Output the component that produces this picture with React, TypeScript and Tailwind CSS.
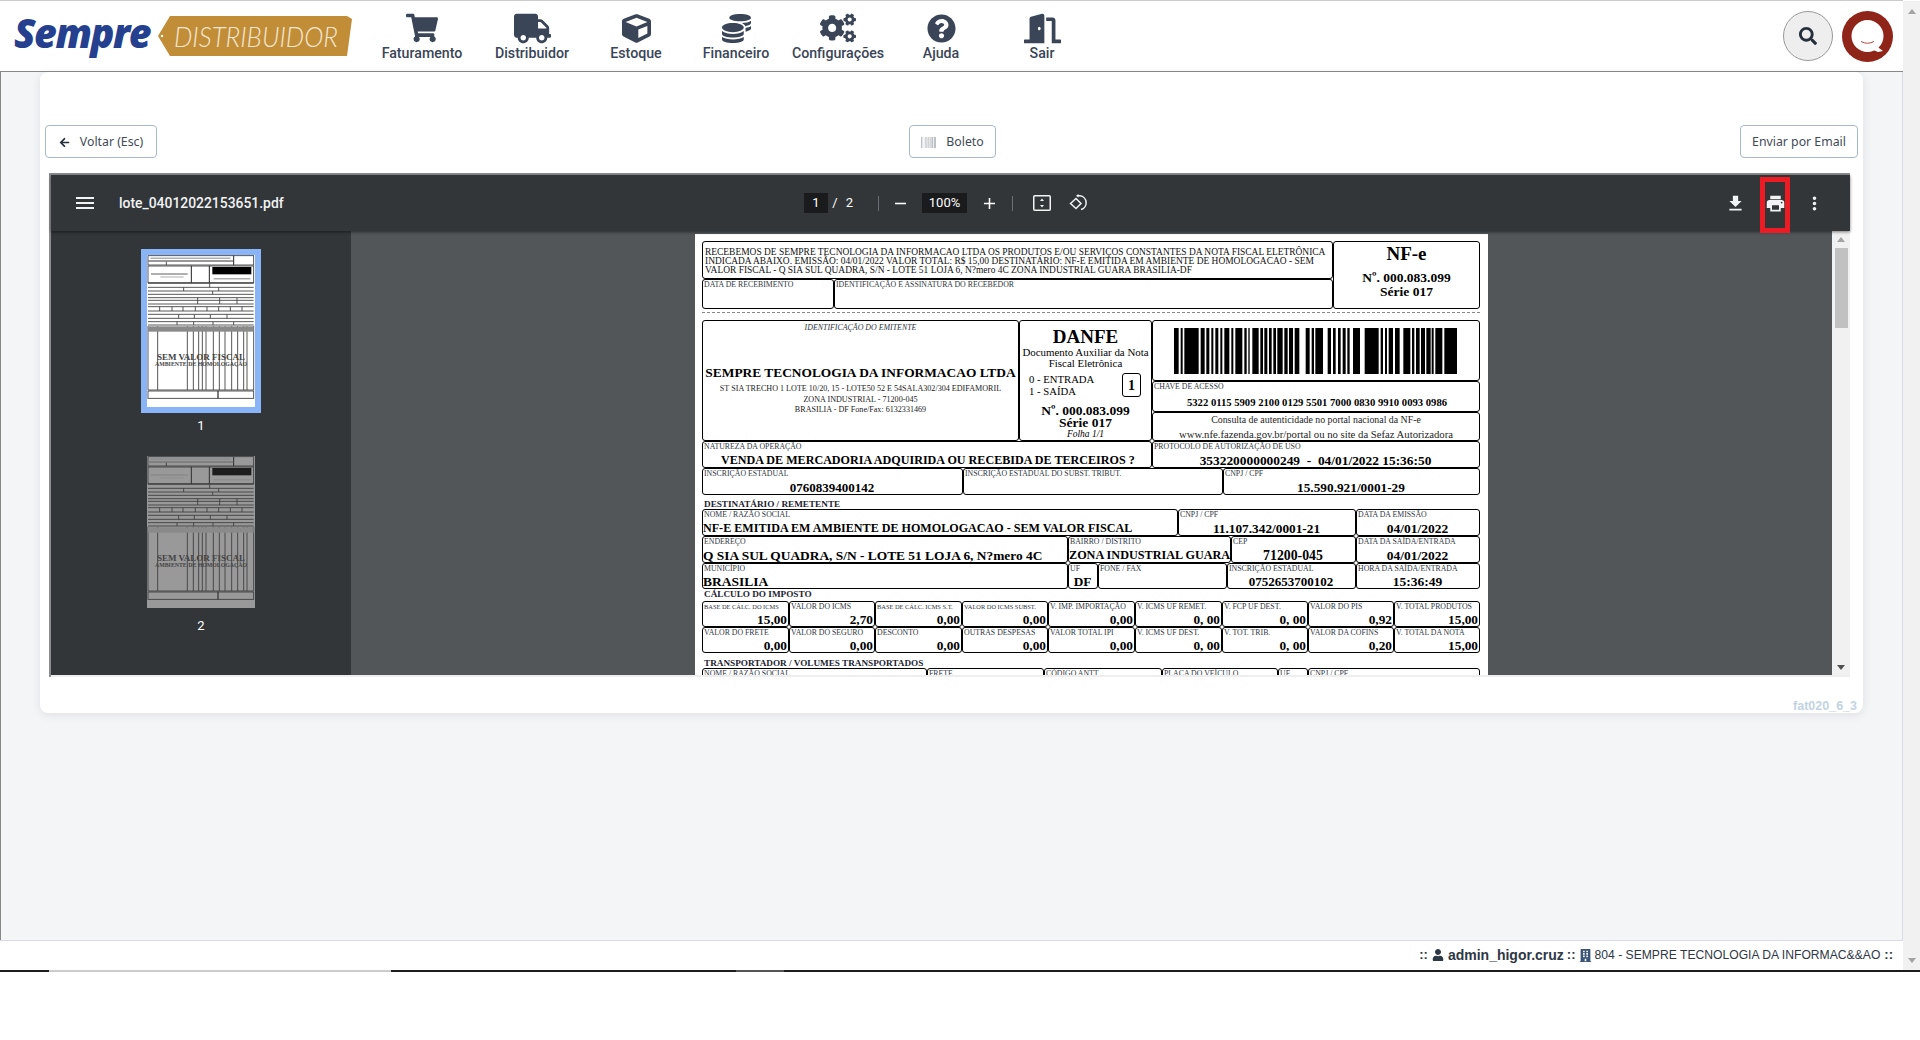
import React from "react";
import { FaShoppingCart, FaTruck, FaCube, FaCoins, FaCogs, FaQuestionCircle, FaDoorOpen, FaSearch, FaArrowLeft, FaBarcode, FaUser, FaBuilding } from "react-icons/fa";
import { MdMenu, MdFileDownload, MdPrint, MdMoreVert, MdRemove, MdAdd } from "react-icons/md";

const NAV: [string, React.ReactNode, string][] = [
  ["Faturamento", <FaShoppingCart size={32} />, "w-[100px]"],
  ["Distribuidor", <FaTruck size={37} />, "w-[120px]"],
  ["Estoque", <FaCube size={29} />, "w-[88px]"],
  ["Financeiro", <FaCoins size={29} />, "w-[112px]"],
  ["Configurações", <FaCogs size={36} />, "w-[92px]"],
  ["Ajuda", <FaQuestionCircle size={29} />, "w-[114px]"],
  ["Sair", <FaDoorOpen size={37} />, "w-[88px]"],
];

const BARS = [[13,27],[33,39],[44,87],[93,105],[110,119],[125,131],[137,146],[152,158],[164,179],[185,191],[197,218],[224,231],[236,240],[248,267],[272,280],[284,293],[298,306],[311,319],[323,339],[344,354],[358,370],[375,389],[408,420],[426,433],[437,460],[474,484],[490,498],[505,513],[519,528],[533,540],[550,571],[585,627],[633,640],[646,652],[657,670],[676,690],[701,722],[727,734],[739,750],[754,766],[770,783],[786,792],[797,818],[824,862]];

function Logo() {
  return (
    <svg width="360" height="60" viewBox="0 0 360 60" className="shrink-0">
      <text x="14" y="42" fontFamily="'Open Sans', sans-serif" fontWeight="800" fontStyle="italic" fontSize="40" letterSpacing="-1.5" fill="#24408e" textLength="136" lengthAdjust="spacingAndGlyphs">Sempre</text>
      <polygon points="170,10 347,10 352,13 347,50 170,50 158,30" fill="#c28d37" />
      <circle cx="162" cy="30" r="1.2" fill="#fff" />
      <text x="174" y="41" fontFamily="Lato, sans-serif" fontStyle="italic" fontWeight="300" fontSize="27" fill="#f1e6d2" textLength="164" lengthAdjust="spacingAndGlyphs">DISTRIBUIDOR</text>
    </svg>
  );
}

function Avatar() {
  return (
    <svg width="51" height="51" viewBox="0 0 51 51" className="shrink-0">
      <circle cx="25.5" cy="25.5" r="25.5" fill="#8f2418" />
      <circle cx="25.5" cy="25" r="16" fill="#fff" />
      <polygon points="33,34 41,40 36,41 29,38" fill="#fff" />
      <path d="M19 30.5 Q25.5 34 32 30.5" fill="none" stroke="#b5483c" strokeWidth="1" />
    </svg>
  );
}

function Thumb({ dim }: { dim?: boolean }) {
  const ys = [85, 97, 108, 118, 128, 136, 147, 155, 168, 178, 190, 200, 210];
  const xs = [32, 121, 139, 155, 166, 177, 199, 217, 234, 254, 272, 290, 300];
  return (
    <svg width="108" height="152" viewBox="0 0 324 456" className="block">
      <rect width="324" height="456" fill={dim ? "#999999" : "#ffffff"} />
      <g fill="none" stroke="#3c3c3c" strokeWidth="2.6">
        <rect x="3" y="2" width="257" height="28" />
        <line x1="58" y1="18" x2="58" y2="30" />
        <line x1="3" y1="18" x2="260" y2="18" stroke="#777" strokeWidth="4" />
        <rect x="260" y="2" width="60" height="28" />
        <rect x="3" y="33" width="130" height="50" />
        <rect x="133" y="33" width="54" height="50" />
        <rect x="187" y="33" width="133" height="50" />
        {ys.map((y) => <line key={y} x1="3" y1={y} x2="320" y2={y} />)}
        {[[188, 85, 97], [110, 97, 108], [215, 97, 108], [197, 108, 118], [152, 128, 147], [218, 128, 147], [270, 128, 147], [38, 155, 168], [75, 155, 168], [108, 155, 168], [145, 155, 168], [180, 155, 168], [215, 155, 168], [250, 155, 168], [285, 155, 168], [95, 178, 190], [142, 178, 190], [190, 178, 190], [240, 178, 190], [90, 200, 210], [140, 200, 210], [198, 200, 210], [260, 200, 210]].map(([x, a, b], i) => (
          <line key={i} x1={x} y1={a} x2={x} y2={b} />
        ))}
        {xs.map((x) => <line key={x} x1={x} y1="213" x2={x} y2="405" />)}
        <line x1="3" y1="213" x2="3" y2="405" />
        <line x1="320" y1="213" x2="320" y2="405" />
        <line x1="3" y1="405" x2="320" y2="405" />
        <rect x="3" y="408" width="210" height="22" />
        <rect x="213" y="408" width="107" height="22" />
      </g>
      <rect x="3" y="214" width="317" height="16" fill="#8a8a8a" />
      <rect x="196" y="36" width="117" height="22" fill={dim ? "#1d1d1d" : "#000"} />
      <g fill="#888">
        <rect x="10" y="8" width="240" height="3" />
        <rect x="12" y="55" width="110" height="4" />
        <rect x="40" y="65" width="70" height="2" />
        <rect x="200" y="70" width="110" height="3" />
      </g>
      <text x="162" y="315" textAnchor="middle" fontFamily="'Liberation Serif', serif" fontWeight="700" fontSize="27" fill="#444">SEM VALOR FISCAL</text>
      <text x="162" y="332" textAnchor="middle" fontFamily="'Liberation Serif', serif" fontWeight="700" fontSize="17.5" fill="#444">AMBIENTE DE HOMOLOGAÇÃO</text>
    </svg>
  );
}

function Cell({ w, label, value, align = "center", small, pad = 0, vsize = "text-[13.3px]" }: { w: number; label: string; value?: string; align?: "left" | "center" | "right"; small?: boolean; pad?: number; vsize?: string }) {
  const al = align === "left" ? "text-left" : align === "right" ? "text-right" : "text-center";
  return (
    <div style={{ width: w }} className="h-full shrink-0 border border-black rounded-[3px] flex flex-col justify-between overflow-hidden">
      <div className={`${small ? "text-[6.4px]" : "text-[7.8px]"} leading-[9px] pl-[1px] text-[#2f3640] whitespace-nowrap`}>{label}</div>
      {value !== undefined && <div style={{ paddingLeft: pad }} className={`${vsize} ${al} font-bold leading-[13px] whitespace-pre text-black pr-[1px]`}>{value}</div>}
    </div>
  );
}

function Heading({ text, h }: { text: string; h: string }) {
  return <div className={`${h} flex pl-[2px] text-[9.2px] leading-[10px] font-bold text-[#1c2230] whitespace-nowrap`}>{text}</div>;
}

function Danfe() {
  return (
    <div className="w-[793px] h-[441px] bg-white overflow-hidden pl-[7px] pt-[7px] shrink-0 text-black" style={{ fontFamily: "'Liberation Serif', serif" }}>
      <div className="w-[778px] flex h-[68px]">
        <div className="w-[631px] flex flex-col">
          <div className="h-[38px] border border-black rounded-[3px] px-[2px] pt-[6px] text-[9.45px] leading-[9.1px] text-[#101010] whitespace-nowrap">
            <div>RECEBEMOS DE SEMPRE TECNOLOGIA DA INFORMACAO LTDA OS PRODUTOS E/OU SERVIÇOS CONSTANTES DA NOTA FISCAL ELETRÔNICA</div>
            <div>INDICADA ABAIXO. EMISSÃO: 04/01/2022 VALOR TOTAL: R$ 15,00 DESTINATÁRIO: NF-E EMITIDA EM AMBIENTE DE HOMOLOGACAO - SEM</div>
            <div>VALOR FISCAL - Q SIA SUL QUADRA, S/N - LOTE 51 LOJA 6, N?mero 4C ZONA INDUSTRIAL GUARA BRASILIA-DF</div>
          </div>
          <div className="h-[30px] flex">
            <Cell w={132} label="DATA DE RECEBIMENTO" />
            <Cell w={499} label="IDENTIFICAÇÃO E ASSINATURA DO RECEBEDOR" />
          </div>
        </div>
        <div className="w-[147px] border border-black rounded-[3px] flex flex-col items-center font-bold">
          <div className="text-[19px] leading-[20px] mt-[2px]">NF-e</div>
          <div className="text-[13.5px] leading-[14px] mt-[7px]">Nº. 000.083.099</div>
          <div className="text-[13.5px] leading-[14px]">Série 017</div>
        </div>
      </div>
      <div className="w-[778px] h-[11px] pt-[3px] overflow-hidden">
        <div className="w-full border-t border-dashed border-[#888]" />
      </div>
      <div className="w-[778px] flex h-[121px]">
        <div className="w-[317px] shrink-0 border border-black rounded-[3px] flex flex-col items-center">
          <div className="text-[7.9px] leading-[9px] italic mt-[2px] text-[#2f3640]">IDENTIFICAÇÃO DO EMITENTE</div>
          <div className="text-[13.4px] leading-[15px] font-bold mt-[33px] whitespace-nowrap">SEMPRE TECNOLOGIA DA INFORMACAO LTDA</div>
          <div className="text-[8.1px] leading-[10.5px] mt-[4px] text-center text-[#222] whitespace-nowrap">
            <div>ST SIA TRECHO 1 LOTE 10/20, 15 - LOTE50 52 E 54SALA302/304 EDIFAMORIL</div>
            <div>ZONA INDUSTRIAL - 71200-045</div>
            <div>BRASILIA - DF Fone/Fax: 6132331469</div>
          </div>
        </div>
        <div className="w-[133px] shrink-0 border border-black rounded-[3px] flex flex-col items-center">
          <div className="text-[19px] leading-[20px] font-bold mt-[6px]">DANFE</div>
          <div className="text-[10.9px] leading-[11px] text-center whitespace-nowrap">Documento Auxiliar da Nota<br />Fiscal Eletrônica</div>
          <div className="w-full flex items-center justify-between pl-[9px] pr-[10px] mt-[4px]">
            <div className="text-[10.7px] leading-[12px]">0 - ENTRADA<br />1 - SAÍDA</div>
            <div className="w-[19px] h-[24px] border border-black rounded-[3px] flex items-center justify-center text-[14px] font-bold">1</div>
          </div>
          <div className="text-[13.5px] leading-[12px] font-bold mt-[8px]">Nº. 000.083.099</div>
          <div className="text-[13.5px] leading-[12px] font-bold">Série 017</div>
          <div className="text-[9.5px] leading-[10px] italic">Folha 1/1</div>
        </div>
        <div className="w-[328px] shrink-0 flex flex-col">
          <div className="h-[61px] border border-black rounded-[3px] pl-[21px] pt-[7px]">
            <svg width="283" height="46" viewBox="13 0 849 137" preserveAspectRatio="none" className="block">
              {BARS.map(([a, b]) => <rect key={a} x={a} y="0" width={b - a} height="137" fill="#000" />)}
            </svg>
          </div>
          <div className="h-[31px] border border-black rounded-[3px] flex flex-col">
            <div className="text-[7.8px] leading-[9px] pl-[1px] text-[#2f3640]">CHAVE DE ACESSO</div>
            <div className="text-[10.65px] leading-[11px] font-bold text-center mt-[6px] pl-[2px] whitespace-nowrap">5322 0115 5909 2100 0129 5501 7000 0830 9910 0093 0986</div>
          </div>
          <div className="h-[29px] border border-black rounded-[3px] leading-[14px] text-center text-[#1c1c1c] whitespace-nowrap">
            <div className="text-[9.85px]">Consulta de autenticidade no portal nacional da NF-e</div>
            <div className="text-[10.7px]">www.nfe.fazenda.gov.br/portal ou no site da Sefaz Autorizadora</div>
          </div>
        </div>
      </div>
      <div className="w-[778px] flex h-[27px]">
        <Cell w={450} label="NATUREZA DA OPERAÇÃO" value="VENDA DE MERCADORIA ADQUIRIDA OU RECEBIDA DE TERCEIROS ?" align="left" pad={18} vsize="text-[12.1px]" />
        <Cell w={328} label="PROTOCOLO DE AUTORIZAÇÃO DE USO" value="353220000000249  -  04/01/2022 15:36:50" vsize="text-[13.4px]" />
      </div>
      <div className="w-[778px] flex h-[27px]">
        <Cell w={261} label="INSCRIÇÃO ESTADUAL" value="0760839400142" vsize="text-[13px]" />
        <Cell w={260} label="INSCRIÇÃO ESTADUAL DO SUBST. TRIBUT." />
        <Cell w={257} label="CNPJ / CPF" value="15.590.921/0001-29" />
      </div>
      <Heading text="DESTINATÁRIO / REMETENTE" h="h-[14px] items-end" />
      <div className="w-[778px] flex h-[27px]">
        <Cell w={476} label="NOME / RAZÃO SOCIAL" value="NF-E EMITIDA EM AMBIENTE DE HOMOLOGACAO - SEM VALOR FISCAL" align="left" vsize="text-[12.1px]" />
        <Cell w={178} label="CNPJ / CPF" value="11.107.342/0001-21" />
        <Cell w={124} label="DATA DA EMISSÃO" value="04/01/2022" vsize="text-[13.5px]" />
      </div>
      <div className="w-[778px] flex h-[27px]">
        <Cell w={366} label="ENDEREÇO" value="Q SIA SUL QUADRA, S/N - LOTE 51 LOJA 6, N?mero 4C" align="left" vsize="text-[13.4px]" />
        <Cell w={163} label="BAIRRO / DISTRITO" value="ZONA INDUSTRIAL GUARA" align="left" vsize="text-[12.2px]" />
        <Cell w={125} label="CEP" value="71200-045" vsize="text-[13.8px]" />
        <Cell w={124} label="DATA DA SAÍDA/ENTRADA" value="04/01/2022" vsize="text-[13.5px]" />
      </div>
      <div className="w-[778px] flex h-[26px]">
        <Cell w={366} label="MUNICÍPIO" value="BRASILIA" align="left" vsize="text-[13.5px]" />
        <Cell w={30} label="UF" value="DF" />
        <Cell w={129} label="FONE / FAX" />
        <Cell w={129} label="INSCRIÇÃO ESTADUAL" value="0752653700102" vsize="text-[13px]" />
        <Cell w={124} label="HORA DA SAÍDA/ENTRADA" value="15:36:49" vsize="text-[13.5px]" />
      </div>
      <Heading text="CÁLCULO DO IMPOSTO" h="h-[12px] items-start" />
      <div className="w-[778px] flex h-[26px]">
        <Cell w={87} small label="BASE DE CÁLC. DO ICMS" value="15,00" align="right" />
        <Cell w={86} label="VALOR DO ICMS" value="2,70" align="right" />
        <Cell w={87} small label="BASE DE CÁLC. ICMS S.T." value="0,00" align="right" />
        <Cell w={86} small label="VALOR DO ICMS SUBST." value="0,00" align="right" />
        <Cell w={87} label="V. IMP. IMPORTAÇÃO" value="0,00" align="right" />
        <Cell w={87} label="V. ICMS UF REMET." value="0, 00" align="right" />
        <Cell w={86} label="V. FCP UF DEST." value="0, 00" align="right" />
        <Cell w={86} label="VALOR DO PIS" value="0,92" align="right" />
        <Cell w={86} label="V. TOTAL PRODUTOS" value="15,00" align="right" />
      </div>
      <div className="w-[778px] flex h-[26px]">
        <Cell w={87} label="VALOR DO FRETE" value="0,00" align="right" />
        <Cell w={86} label="VALOR DO SEGURO" value="0,00" align="right" />
        <Cell w={87} label="DESCONTO" value="0,00" align="right" />
        <Cell w={86} label="OUTRAS DESPESAS" value="0,00" align="right" />
        <Cell w={87} label="VALOR TOTAL IPI" value="0,00" align="right" />
        <Cell w={87} label="V. ICMS UF DEST." value="0, 00" align="right" />
        <Cell w={86} label="V. TOT. TRIB." value="0, 00" align="right" />
        <Cell w={86} label="VALOR DA COFINS" value="0,20" align="right" />
        <Cell w={86} label="V. TOTAL DA NOTA" value="15,00" align="right" />
      </div>
      <Heading text="TRANSPORTADOR / VOLUMES TRANSPORTADOS" h="h-[15px] items-end" />
      <div className="w-[778px] flex h-[27px]">
        <Cell w={225} label="NOME / RAZÃO SOCIAL" />
        <Cell w={117} label="FRETE" />
        <Cell w={118} label="CÓDIGO ANTT" />
        <Cell w={116} label="PLACA DO VEÍCULO" />
        <Cell w={30} label="UF" />
        <Cell w={172} label="CNPJ / CPF" />
      </div>
    </div>
  );
}

function Toolbar() {
  return (
    <div className="h-[56px] bg-[#323639] flex items-center text-white shrink-0 relative shadow-[0_1px_3px_rgba(0,0,0,0.5)] z-10" style={{ fontFamily: "Roboto, sans-serif" }}>
      <div className="w-[46px] flex justify-end"><MdMenu size={24} className="text-[#f1f3f4]" /></div>
      <div className="w-[707px] pl-[22px] text-[13.9px] font-medium text-[#f1f3f4] whitespace-nowrap">lote_04012022153651.pdf</div>
      <div className="w-[24px] h-[20px] bg-[#191b1c] flex items-center justify-center text-[13px]">1</div>
      <div className="w-[12px] text-center ml-[1px] text-[13px]">/</div>
      <div className="w-[17px] text-center text-[13px]">2</div>
      <div className="w-[1px] h-[15px] bg-[#6b6f73] ml-[20px]" />
      <div className="w-[43px] flex justify-center"><MdRemove size={19} /></div>
      <div className="w-[45px] h-[20px] bg-[#191b1c] flex items-center justify-center text-[13px]">100%</div>
      <div className="w-[45px] flex justify-center"><MdAdd size={19} /></div>
      <div className="w-[1px] h-[15px] bg-[#6b6f73]" />
      <div className="ml-[20px] flex items-center gap-[18px]">
        <svg width="18" height="16" viewBox="0 0 18 16" fill="none" stroke="#f1f3f4">
          <rect x="0.75" y="0.75" width="16.5" height="14.5" rx="1" strokeWidth="1.5" />
          <path d="M9 3.5 L11 6 H7 Z M9 12.5 L11 10 H7 Z" fill="#f1f3f4" stroke="none" />
        </svg>
        <svg width="18" height="18" viewBox="0 0 18 18" fill="none" stroke="#f1f3f4" strokeWidth="1.5">
          <path d="M1.5 9.5 L7 4.5 L12 9.5 L7 14.5 Z" />
          <path d="M8 1.8 H11 A7 7 0 0 1 12 15.5" />
          <path d="M9.5 0 L7 1.8 L9.5 3.6 Z" fill="#f1f3f4" stroke="none" />
        </svg>
      </div>
      <div className="flex-1" />
      <div className="flex items-center mr-[25px]">
        <MdFileDownload size={21} className="text-[#f1f3f4] mr-[19px]" />
        <div className="relative">
          <MdPrint size={21} className="text-[#f1f3f4]" />
          <div className="absolute left-[-5px] top-[-16px] w-[30px] h-[56px] border-[5px] border-[#ed1c24]" />
        </div>
        <MdMoreVert size={21} className="text-[#f1f3f4] ml-[18px]" />
      </div>
    </div>
  );
}

function Viewer() {
  return (
    <div className="ml-[4px] w-[1801px] h-[504px] border-t-2 border-l-2 border-[#8b8d8f] flex flex-col">
      <Toolbar />
      <div className="flex-1 flex min-h-0 border-b-2 border-[#eeeeee] w-[1799px]">
        <div className="w-[300px] bg-[#323639] flex flex-col items-center pt-[18px] text-white text-[13px]" style={{ fontFamily: "Roboto, sans-serif" }}>
          <div className="border-[6px] border-[#8ab4f8]"><Thumb /></div>
          <div className="mt-[5px] h-[16px] leading-[16px]">1</div>
          <div className="mt-[22px]"><Thumb dim /></div>
          <div className="mt-[10px] h-[16px] leading-[16px]">2</div>
        </div>
        <div className="flex-1 bg-[#525659] flex pl-[344px] pt-[3px] overflow-hidden">
          <Danfe />
        </div>
        <div className="w-[18px] bg-[#f1f1f1] flex flex-col items-center justify-between pt-[6px] pb-[5px]">
          <div className="flex flex-col items-center gap-[6px]">
            <div className="w-0 h-0 border-x-[4px] border-x-transparent border-b-[5px] border-b-[#a3a3a3]" />
            <div className="w-[13px] h-[80px] bg-[#c1c1c1]" />
          </div>
          <div className="w-0 h-0 border-x-[4px] border-x-transparent border-t-[5px] border-t-[#505050]" />
        </div>
      </div>
    </div>
  );
}

function OutlineButton({ className, children }: { className: string; children: React.ReactNode }) {
  return (
    <div className={`${className} h-[33px] bg-white border border-[#a9b8c6] rounded-[4px] flex items-center justify-center pt-[1px] text-[12.3px] text-[#3f4a58]`} style={{ fontFamily: "'Noto Sans', sans-serif" }}>
      {children}
    </div>
  );
}

export default function App() {
  return (
    <div className="w-[1920px] h-[1040px] bg-white overflow-hidden">
      <div className="flex h-[970px]">
        <div className="w-[1903px] flex flex-col">
          <header className="h-[72px] shrink-0 bg-white border-t border-t-[#cccccc] border-b border-b-[#888888] flex items-center pr-[10px]">
            <Logo />
            <nav className="flex ml-[12px]">
              {NAV.map(([label, icon, w]) => (
                <div key={label} className={`${w} flex flex-col items-center text-[#3a4557]`}>
                  <div className="h-[30px] mt-[2px] flex items-center justify-center">{icon}</div>
                  <div className="text-[14.2px] leading-[16px] font-medium mt-[2px] whitespace-nowrap" style={{ fontFamily: "Roboto, sans-serif" }}>{label}</div>
                </div>
              ))}
            </nav>
            <div className="flex-1" />
            <div className="w-[50px] h-[50px] rounded-full bg-[#eeeeee] border border-[#999999] flex items-center justify-center mr-[9px]">
              <FaSearch size={18} className="text-[#26303d]" />
            </div>
            <Avatar />
          </header>
          <main className="flex-1 bg-[#f4f5f7] border-l border-l-[#888888] border-r border-r-[#d8dce6] pl-[39px] min-h-0">
            <div className="w-[1823px] h-[641px] bg-white rounded-[8px] shadow-[0_2px_8px_rgba(60,70,90,0.12)] px-[5px] pt-[53px]">
              <div className="flex justify-between items-start h-[48px]">
                <OutlineButton className="w-[112px]">
                  <FaArrowLeft size={11} className="text-[#26303d] mr-[10px]" />
                  Voltar (Esc)
                </OutlineButton>
                <OutlineButton className="w-[87px] ml-[8px]">
                  <FaBarcode size={15} className="text-[#a7abb5] mr-[10px]" />
                  Boleto
                </OutlineButton>
                <OutlineButton className="w-[118px]">Enviar por Email</OutlineButton>
              </div>
              <Viewer />
              <div className="text-right text-[12.5px] leading-[14px] font-bold text-[#c2d3e2] mt-[22px] pr-[1px]" style={{ fontFamily: "'Liberation Sans', sans-serif" }}>fat020_6_3</div>
            </div>
          </main>
          <footer className="h-[30px] shrink-0 bg-white border-t border-t-[#d8dce6] flex items-center justify-end pr-[10px] pb-[1px] text-[#2e3745] text-[12.15px] whitespace-nowrap" style={{ fontFamily: "'Liberation Sans', sans-serif" }}>
            <span className="font-bold text-[13px]">::</span>
            <FaUser size={12} className="mx-[4px]" />
            <span className="font-bold text-[14px]">admin_higor.cruz</span>
            <span className="font-bold text-[13px] mx-[3px]">::</span>
            <FaBuilding size={13} className="mr-[3px] text-[#3b5578]" />
            <span>804 - SEMPRE TECNOLOGIA DA INFORMAC&amp;&amp;AO</span>
            <span className="font-bold text-[13px] ml-[4px]">::</span>
          </footer>
        </div>
        <aside className="w-[17px] bg-[#f1f1f1] flex flex-col items-center justify-between pt-[8px] pb-[7px] mt-[1px]">
          <div className="w-0 h-0 border-x-[4px] border-x-transparent border-b-[5px] border-b-[#a3a3a3]" />
          <div className="w-0 h-0 border-x-[4px] border-x-transparent border-t-[5px] border-t-[#a3a3a3]" />
        </aside>
      </div>
      <div className="h-[2px] flex">
        <div className="w-[49px] bg-[#1c1c1c]" />
        <div className="w-[342px] bg-[#cccccc]" />
        <div className="w-[345px] bg-[#1c1c1c]" />
        <div className="w-[48px] bg-[#555555]" />
        <div className="flex-1 bg-[#1c1c1c]" />
      </div>
    </div>
  );
}
